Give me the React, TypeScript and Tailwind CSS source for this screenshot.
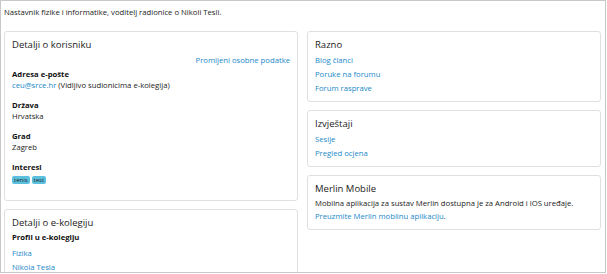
const font = { fontFamily: '"Open Sans", "Noto Sans", sans-serif' }

function Card({ title, children, className = '' }: { title: string; children: React.ReactNode; className?: string }) {
  return (
    <div className={`rounded-[3px] border border-[#e0e0e0] bg-white px-[7px] pt-[6px] ${className}`}>
      <h3 className="text-[9.5px] leading-[14px] text-[#222]">{title}</h3>
      {children}
    </div>
  )
}

function Field({ label, children }: { label: string; children: React.ReactNode }) {
  return (
    <div className="mb-[9px]">
      <div className="font-bold leading-[11px] text-[#111]">{label}</div>
      <div className="leading-[11px] text-[#222]">{children}</div>
    </div>
  )
}

const linkCls = 'block leading-[14px] text-[#2189c9]'

export default function App() {
  return (
    <div className="h-[274px] w-[607px] overflow-hidden bg-white text-[7.7px] leading-[11px]" style={font}>
      <div className="h-[273px] w-[606px] overflow-hidden border border-[#c8c8c8] px-[3px]">
        <p className="pt-[5px] leading-[12px] text-[#222]">
          Nastavnik fizike i informatike, voditelj radionice o Nikoli Tesli.
        </p>

        <div className="mt-[13px] grid grid-cols-[294px_294px] gap-x-[9px]">
          {/* left column */}
          <div className="flex flex-col gap-[8px]">
            <Card title="Detalji o korisniku" className="h-[170px]">
              <div className="mt-[3px] text-right leading-[11px] text-[#2189c9]">Promijeni osobne podatke</div>
              <div className="mt-[3px]">
                <Field label="Adresa e-pošte">
                  <span className="text-[#2189c9]">ceu@srce.hr</span> (Vidljivo sudionicima e-kolegija)
                </Field>
                <Field label="Država">Hrvatska</Field>
                <Field label="Grad">Zagreb</Field>
                <div className="font-bold leading-[11px] text-[#111]">Interesi</div>
                <div className="mt-[3px] flex gap-[2px]">
                  <span className="rounded-[2px] bg-[#5bc0de] px-[2px] text-[6px] leading-[8px] text-[#1d2125]">tenis</span>
                  <span className="rounded-[2px] bg-[#5bc0de] px-[2px] text-[6px] leading-[8px] text-[#1d2125]">test</span>
                </div>
              </div>
            </Card>
            <Card title="Detalji o e-kolegiju" className="h-[80px]">
              <div className="mt-[2px] font-bold leading-[11px] text-[#111]">Profil u e-kolegiju</div>
              <div className="mt-[3px]">
                <a className={linkCls}>Fizika</a>
                <a className={linkCls}>Nikola Tesla</a>
              </div>
            </Card>
          </div>

          {/* right column */}
          <div className="flex flex-col gap-[8px]">
            <Card title="Razno" className="h-[71px]">
              <div className="mt-[1px]">
                <a className={linkCls}>Blog članci</a>
                <a className={linkCls}>Poruke na forumu</a>
                <a className={linkCls}>Forum rasprave</a>
              </div>
            </Card>
            <Card title="Izvještaji" className="h-[57px]">
              <div className="mt-[1px]">
                <a className={linkCls}>Sesije</a>
                <a className={linkCls}>Pregled ocjena</a>
              </div>
            </Card>
            <Card title="Merlin Mobile" className="h-[55px]">
              <p className="mt-[1px] leading-[13px] text-[#222]">
                Mobilna aplikacija za sustav Merlin dostupna je za Android i iOS uređaje.
                <br />
                <span className="text-[#2189c9]">Preuzmite Merlin mobilnu aplikaciju</span>.
              </p>
            </Card>
          </div>
        </div>
      </div>
    </div>
  )
}
